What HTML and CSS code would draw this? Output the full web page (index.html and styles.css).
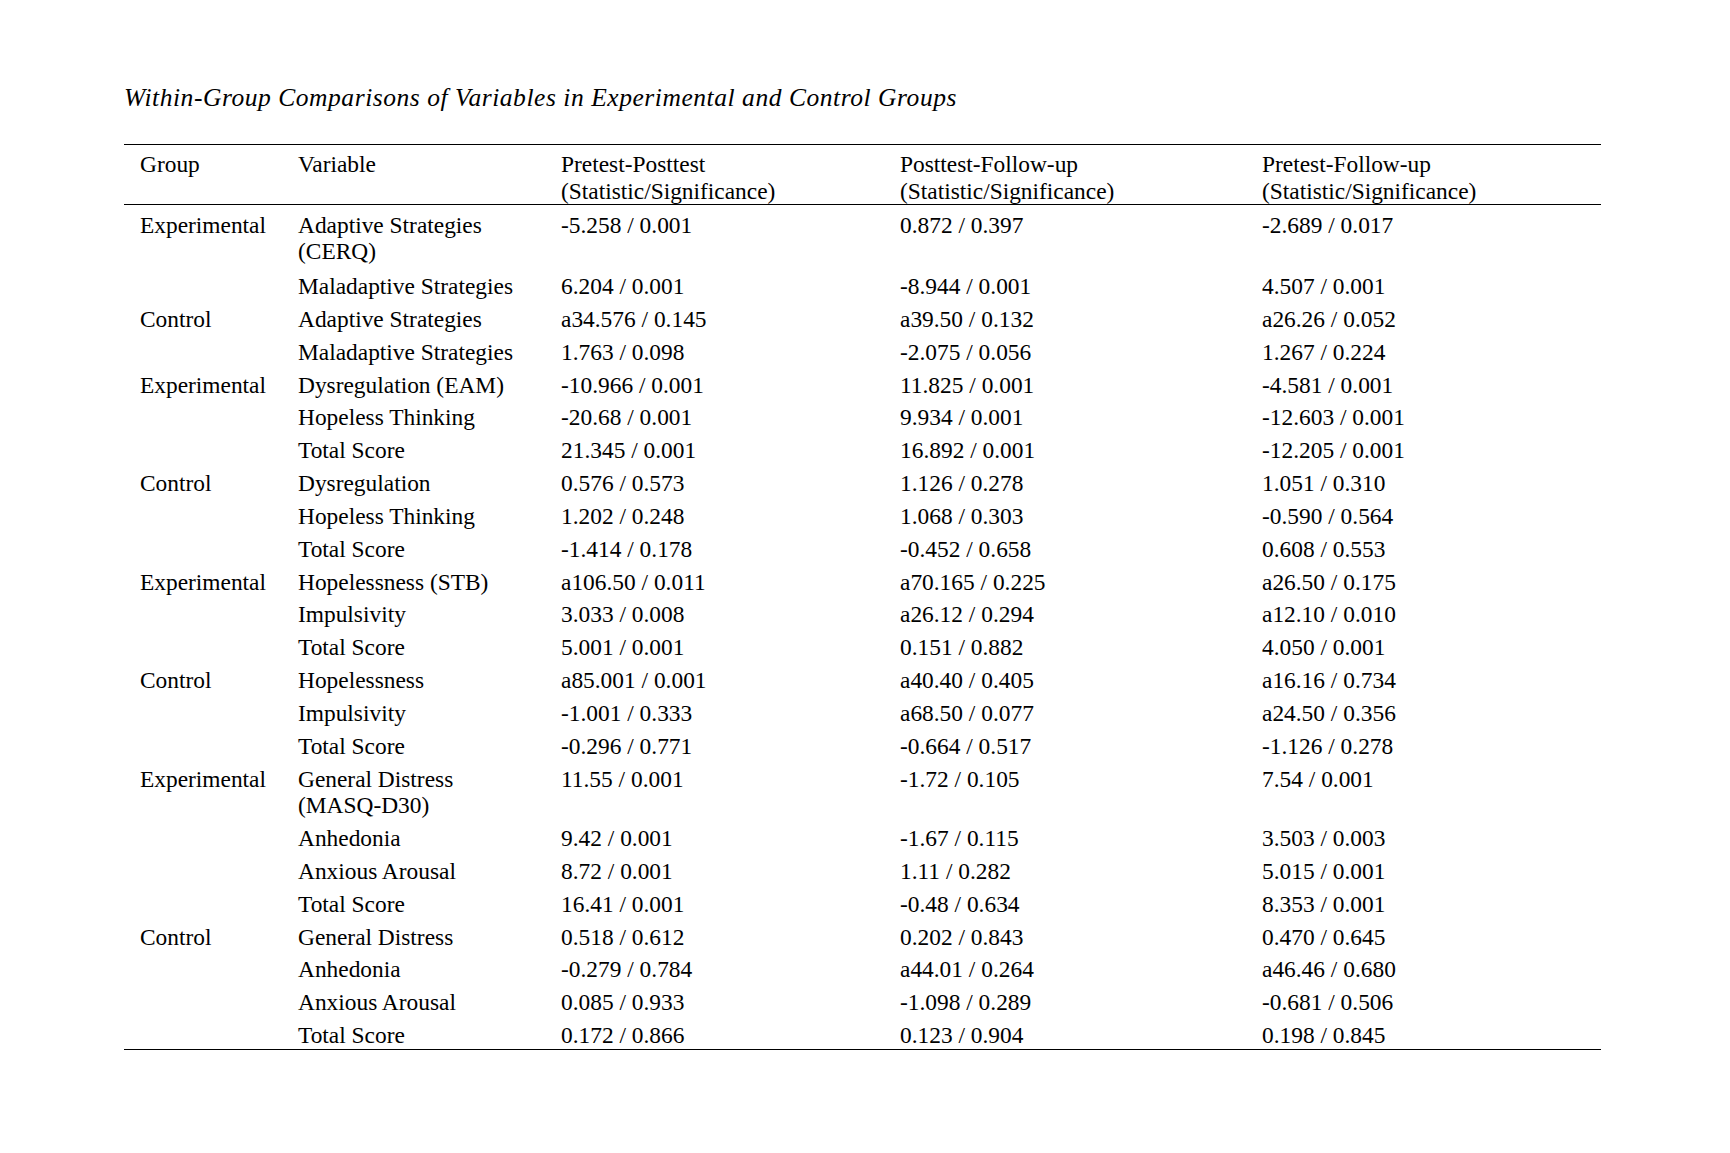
FILE: index.html
```html
<!DOCTYPE html>
<html lang="en">
<head>
<meta charset="utf-8">
<title>Within-Group Comparisons</title>
<link rel="stylesheet" href="styles.css">
</head>
<body>
<div class="page">
  <p class="caption">Within-Group Comparisons of Variables in Experimental and Control Groups</p>
  <table class="data">
    <colgroup>
      <col class="c-group">
      <col class="c-var">
      <col class="c-pp">
      <col class="c-pf">
      <col class="c-prf">
    </colgroup>
    <thead>
      <tr>
        <th>Group</th>
        <th>Variable</th>
        <th>Pretest-Posttest<br>(Statistic/Significance)</th>
        <th>Posttest-Follow-up<br>(Statistic/Significance)</th>
        <th>Pretest-Follow-up<br>(Statistic/Significance)</th>
      </tr>
    </thead>
    <tbody>
      <tr class="two"><td>Experimental</td><td>Adaptive Strategies<br>(CERQ)</td><td>-5.258 / 0.001</td><td>0.872 / 0.397</td><td>-2.689 / 0.017</td></tr>
      <tr><td></td><td>Maladaptive Strategies</td><td>6.204 / 0.001</td><td>-8.944 / 0.001</td><td>4.507 / 0.001</td></tr>
      <tr><td>Control</td><td>Adaptive Strategies</td><td>a34.576 / 0.145</td><td>a39.50 / 0.132</td><td>a26.26 / 0.052</td></tr>
      <tr><td></td><td>Maladaptive Strategies</td><td>1.763 / 0.098</td><td>-2.075 / 0.056</td><td>1.267 / 0.224</td></tr>
      <tr><td>Experimental</td><td>Dysregulation (EAM)</td><td>-10.966 / 0.001</td><td>11.825 / 0.001</td><td>-4.581 / 0.001</td></tr>
      <tr><td></td><td>Hopeless Thinking</td><td>-20.68 / 0.001</td><td>9.934 / 0.001</td><td>-12.603 / 0.001</td></tr>
      <tr><td></td><td>Total Score</td><td>21.345 / 0.001</td><td>16.892 / 0.001</td><td>-12.205 / 0.001</td></tr>
      <tr><td>Control</td><td>Dysregulation</td><td>0.576 / 0.573</td><td>1.126 / 0.278</td><td>1.051 / 0.310</td></tr>
      <tr><td></td><td>Hopeless Thinking</td><td>1.202 / 0.248</td><td>1.068 / 0.303</td><td>-0.590 / 0.564</td></tr>
      <tr><td></td><td>Total Score</td><td>-1.414 / 0.178</td><td>-0.452 / 0.658</td><td>0.608 / 0.553</td></tr>
      <tr><td>Experimental</td><td>Hopelessness (STB)</td><td>a106.50 / 0.011</td><td>a70.165 / 0.225</td><td>a26.50 / 0.175</td></tr>
      <tr><td></td><td>Impulsivity</td><td>3.033 / 0.008</td><td>a26.12 / 0.294</td><td>a12.10 / 0.010</td></tr>
      <tr><td></td><td>Total Score</td><td>5.001 / 0.001</td><td>0.151 / 0.882</td><td>4.050 / 0.001</td></tr>
      <tr><td>Control</td><td>Hopelessness</td><td>a85.001 / 0.001</td><td>a40.40 / 0.405</td><td>a16.16 / 0.734</td></tr>
      <tr><td></td><td>Impulsivity</td><td>-1.001 / 0.333</td><td>a68.50 / 0.077</td><td>a24.50 / 0.356</td></tr>
      <tr><td></td><td>Total Score</td><td>-0.296 / 0.771</td><td>-0.664 / 0.517</td><td>-1.126 / 0.278</td></tr>
      <tr><td>Experimental</td><td>General Distress<br>(MASQ-D30)</td><td>11.55 / 0.001</td><td>-1.72 / 0.105</td><td>7.54 / 0.001</td></tr>
      <tr><td></td><td>Anhedonia</td><td>9.42 / 0.001</td><td>-1.67 / 0.115</td><td>3.503 / 0.003</td></tr>
      <tr><td></td><td>Anxious Arousal</td><td>8.72 / 0.001</td><td>1.11 / 0.282</td><td>5.015 / 0.001</td></tr>
      <tr><td></td><td>Total Score</td><td>16.41 / 0.001</td><td>-0.48 / 0.634</td><td>8.353 / 0.001</td></tr>
      <tr><td>Control</td><td>General Distress</td><td>0.518 / 0.612</td><td>0.202 / 0.843</td><td>0.470 / 0.645</td></tr>
      <tr><td></td><td>Anhedonia</td><td>-0.279 / 0.784</td><td>a44.01 / 0.264</td><td>a46.46 / 0.680</td></tr>
      <tr><td></td><td>Anxious Arousal</td><td>0.085 / 0.933</td><td>-1.098 / 0.289</td><td>-0.681 / 0.506</td></tr>
      <tr><td></td><td>Total Score</td><td>0.172 / 0.866</td><td>0.123 / 0.904</td><td>0.198 / 0.845</td></tr>
    </tbody>
  </table>
</div>
</body>
</html>
```
FILE: styles.css
```css
html, body {
  margin: 0;
  padding: 0;
  background: #ffffff;
}

body {
  font-family: "Liberation Serif", "Times New Roman", serif;
  color: #000000;
  font-size: 23.4px;
}

.page {
  padding: 83px 0 0 124px;
  width: 1477px;
}

.caption {
  margin: 0;
  font-style: italic;
  font-size: 25.5px;
  letter-spacing: 0.55px;
  line-height: 29px;
}

.data {
  margin-top: 32px;
  width: 1477px;
  border-collapse: collapse;
  table-layout: fixed;
}

.c-group { width: 158px; }
.c-var { width: 263px; }
.c-pp { width: 339px; }
.c-pf { width: 362px; }
.c-prf { width: 355px; }

.data th,
.data td {
  text-align: left;
  vertical-align: top;
  font-weight: normal;
  line-height: 26.5px;
  padding: 6.35px 0 0 16px;
  white-space: nowrap;
}

.data tbody tr.two td {
  padding-bottom: 2px;
}

.data thead tr {
  border-top: 1.5px solid #000000;
  border-bottom: 1.5px solid #000000;
}

.data tbody tr:last-child {
  border-bottom: 1.5px solid #000000;
}
```
